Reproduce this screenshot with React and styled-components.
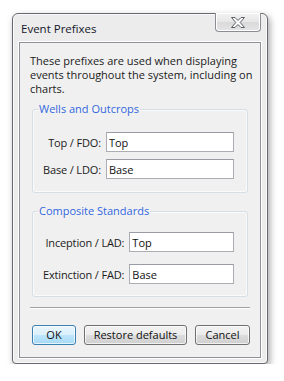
import React from 'react';
import styled, { createGlobalStyle } from 'styled-components';

const Global = createGlobalStyle`
  html, body { margin: 0; padding: 0; background: #fff; }
  body { font-family: "Open Sans", "Liberation Sans", sans-serif; font-size: 11px; color: #1b1b1b; }
`;

const Window = styled.div`
  margin: 13px 0 0 12px;
  width: 256px;
  box-sizing: border-box;
  border: 1px solid #666a70;
  border-radius: 6px 6px 4px 4px;
  background: #ececec;
  box-shadow: inset 0 0 0 1px #fbfbfb, 2px 3px 7px rgba(0, 0, 0, 0.35);
  padding: 0 6px 5px 6px;
  display: flex;
  flex-direction: column;
`;

const TitleBar = styled.div`
  height: 28px;
  display: flex;
  align-items: flex-start;
  justify-content: space-between;
`;

const Title = styled.div`
  font-size: 11.5px;
  line-height: 14px;
  color: #15172a;
  padding: 8px 0 0 2px;
`;

const CloseButton = styled.div`
  width: 46px;
  height: 19px;
  margin-top: -1px;
  box-sizing: border-box;
  border: 1px solid #8a8d92;
  border-top: none;
  border-radius: 0 0 4px 4px;
  background: linear-gradient(#f3f3f3, #e6e6e6 50%, #dadada 51%, #e4e4e4);
  box-shadow: inset 0 0 0 1px #ffffff;
  display: flex;
  align-items: center;
  justify-content: center;
`;

const Client = styled.div`
  border: 1px solid #8f9399;
  box-shadow: 0 0 0 1px #ffffff;
  background: #f0f0f0;
  padding: 11px 0 12px 0;
  display: flex;
  flex-direction: column;
`;

const Intro = styled.p`
  margin: 0;
  padding: 0 6px 0 10px;
  line-height: 14px;
`;

const Group = styled.fieldset`
  margin: ${p => p.$top}px 12px 0 12px;
  padding: ${p => p.$padTop}px 13px ${p => p.$padBottom}px 10px;
  border: 1px solid #d5dfe5;
  border-radius: 3px;
  box-shadow: inset 0 0 0 1px #fafafa;
  min-width: 0;
  display: grid;
  grid-template-columns: auto 1fr;
  column-gap: 5px;
  row-gap: ${p => p.$gap}px;
  align-items: center;
`;

const Legend = styled.legend`
  color: #3267dd;
  line-height: 14px;
  padding: 0 1px;
  margin-left: -5px;
`;

const Label = styled.label`
  text-align: right;
  white-space: nowrap;
  letter-spacing: -0.15px;
`;

const Field = styled.input`
  height: 20px;
  box-sizing: border-box;
  width: 100%;
  border: 1px solid #abadb3;
  border-top-color: #9a9ca3;
  background: #fff;
  font: inherit;
  color: #111;
  padding: 0 2px;
  outline: none;
`;

const Separator = styled.div`
  margin: 10px 10px 0 10px;
  height: 1px;
  background: #a0a0a0;
  box-shadow: 0 1px 0 #ffffff;
`;

const Buttons = styled.div`
  margin-top: 17px;
  padding-left: 12px;
  display: flex;
  gap: 8px;
`;

const Button = styled.button`
  width: ${p => p.$w}px;
  height: 20px;
  box-sizing: border-box;
  padding: 0;
  font: inherit;
  color: #111;
  border-radius: 3px;
  border: 1px solid ${p => (p.$primary ? '#3c7fb1' : '#707070')};
  background: ${p =>
    p.$primary
      ? 'linear-gradient(#eaf6fd, #d9f0fc 50%, #bee6fd 51%, #a7d9f5)'
      : 'linear-gradient(#f2f2f2, #ebebeb 50%, #dddddd 51%, #cfcfcf)'};
  box-shadow: inset 0 0 0 1px rgba(255, 255, 255, 0.7);
  line-height: 16px;
`;

const CloseGlyph = () => (
  <svg width="14" height="11" viewBox="0 0 14 11">
    <path
      d="M0.5 0.5 H4 L7 3.5 L10 0.5 H13.5 L9.2 5.5 L13.5 10.5 H10 L7 7.5 L4 10.5 H0.5 L4.8 5.5 Z"
      fill="#fdfdfd"
      stroke="#5a5e63"
      strokeWidth="1"
      strokeLinejoin="round"
    />
  </svg>
);

export default function App() {
  return (
    <>
      <Global />
      <Window>
        <TitleBar>
          <Title>Event Prefixes</Title>
          <CloseButton><CloseGlyph /></CloseButton>
        </TitleBar>
        <Client>
          <Intro>These prefixes are used when displaying events throughout the system, including on charts.</Intro>
          <Group $top={6} $padTop={16} $padBottom={13} $gap={7}>
            <Legend>Wells and Outcrops</Legend>
            <Label>Top / FDO:</Label>
            <Field defaultValue="Top" />
            <Label>Base / LDO:</Label>
            <Field defaultValue="Base" />
          </Group>
          <Group $top={11} $padTop={14} $padBottom={12} $gap={12}>
            <Legend>Composite Standards</Legend>
            <Label>Inception / LAD:</Label>
            <Field defaultValue="Top" />
            <Label>Extinction / FAD:</Label>
            <Field defaultValue="Base" />
          </Group>
          <Separator />
          <Buttons>
            <Button $primary $w={44}>OK</Button>
            <Button $w={103}>Restore defaults</Button>
            <Button $w={55}>Cancel</Button>
          </Buttons>
        </Client>
      </Window>
    </>
  );
}
